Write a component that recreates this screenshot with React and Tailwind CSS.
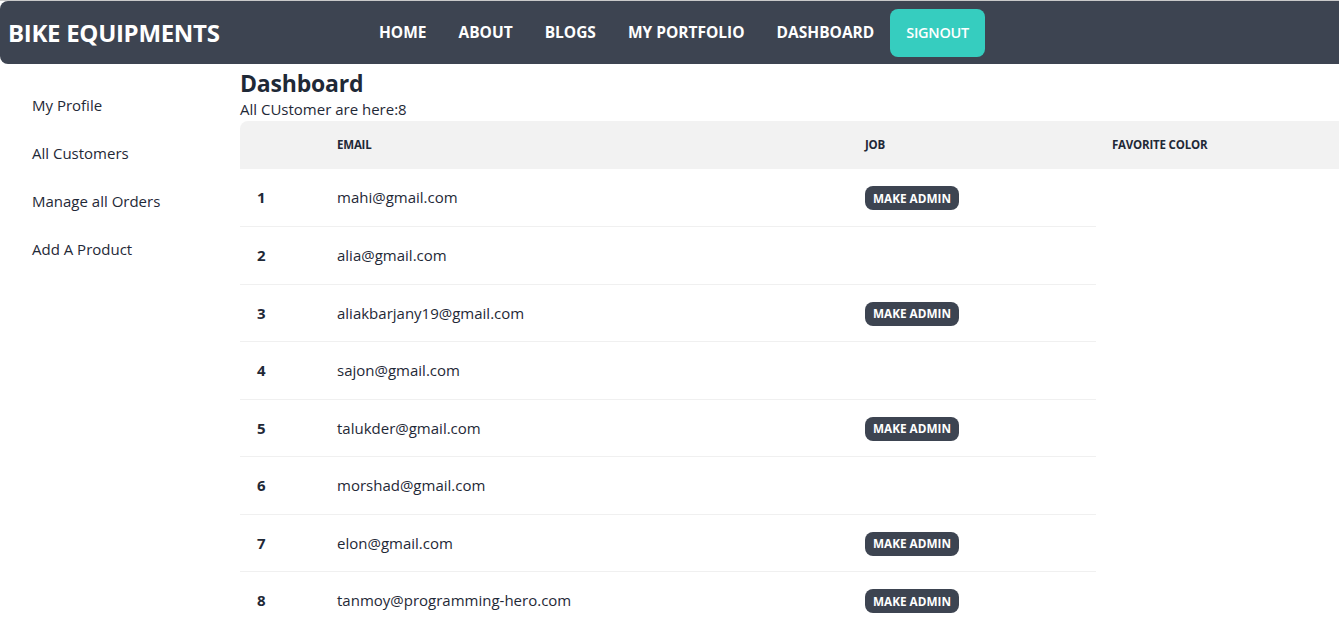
import React from "react";

const customers = [
  { id: 1, email: "mahi@gmail.com", admin: true },
  { id: 2, email: "alia@gmail.com", admin: false },
  { id: 3, email: "aliakbarjany19@gmail.com", admin: true },
  { id: 4, email: "sajon@gmail.com", admin: false },
  { id: 5, email: "talukder@gmail.com", admin: true },
  { id: 6, email: "morshad@gmail.com", admin: false },
  { id: 7, email: "elon@gmail.com", admin: true },
  { id: 8, email: "tanmoy@programming-hero.com", admin: true },
];

const links = ["HOME", "ABOUT", "BLOGS", "MY PORTFOLIO", "DASHBOARD"];
const sideLinks = ["My Profile", "All Customers", "Manage all Orders", "Add A Product"];

const App = () => {
  return (
    <div
      className="min-h-screen w-full bg-white text-[#1f2937] overflow-hidden border-t border-[#c9c9c9]"
      style={{ fontFamily: '"Open Sans", "Noto Sans", sans-serif' }}
    >
      {/* Navbar */}
      <div className="flex items-center h-[63px] w-[1350px] bg-[#3d4451] rounded-lg px-2">
        <div className="w-[355px] text-white text-[24px] font-bold tracking-[-0.3px]">
          BIKE EQUIPMENTS
        </div>
        <ul className="flex items-center">
          {links.map((link) => (
            <li key={link} className="px-4 text-white text-[15.5px] font-bold">
              {link}
            </li>
          ))}
          <li>
            <button className="h-12 px-4 rounded-lg bg-[#36cdbf] text-white text-[14.5px] font-semibold tracking-[-0.3px]">
              SIGNOUT
            </button>
          </li>
        </ul>
      </div>

      {/* Body */}
      <div className="flex">
        {/* Sidebar */}
        <ul className="w-[240px] shrink-0 pt-[17px]">
          {sideLinks.map((item) => (
            <li key={item} className="h-12 flex items-center pl-8 text-[15px]">
              {item}
            </li>
          ))}
        </ul>

        {/* Content */}
        <div className="flex-1 min-w-0">
          <h2 className="text-[23px] font-bold leading-8 mt-[3px] tracking-[-0.2px]">
            Dashboard
          </h2>
          <p className="text-[15px] leading-6 -mt-[2px]">All CUstomer are here:8</p>
          <table className="w-[1120px] border-collapse text-left">
            <thead>
              <tr className="h-12 bg-[#f2f2f2]">
                <th className="w-[81px] rounded-tl-lg"></th>
                <th className="w-[528px] px-4 text-[11.5px] font-bold tracking-[-0.2px]">
                  EMAIL
                </th>
                <th className="w-[247px] px-4 text-[11.5px] font-bold tracking-[-0.2px]">
                  JOB
                </th>
                <th className="px-4 text-[11.5px] font-bold tracking-[-0.2px]">
                  FAVORITE COLOR
                </th>
              </tr>
            </thead>
            <tbody>
              {customers.map((c, i) => {
                const border = i === customers.length - 1 ? "" : "border-b border-[#f0f0f0]";
                return (
                  <tr key={c.id} className="h-[57.5px]">
                    <th className={`px-4 pl-[17px] text-[15px] font-bold ${border}`}>
                      {c.id}
                    </th>
                    <td className={`px-4 text-[15px] ${border}`}>{c.email}</td>
                    <td className={`px-4 ${border}`}>
                      {c.admin && (
                        <button className="h-6 px-2 rounded-lg bg-[#3d4451] text-white text-[11.75px] font-bold">
                          MAKE ADMIN
                        </button>
                      )}
                    </td>
                  </tr>
                );
              })}
            </tbody>
          </table>
        </div>
      </div>
    </div>
  );
};

export default App;
